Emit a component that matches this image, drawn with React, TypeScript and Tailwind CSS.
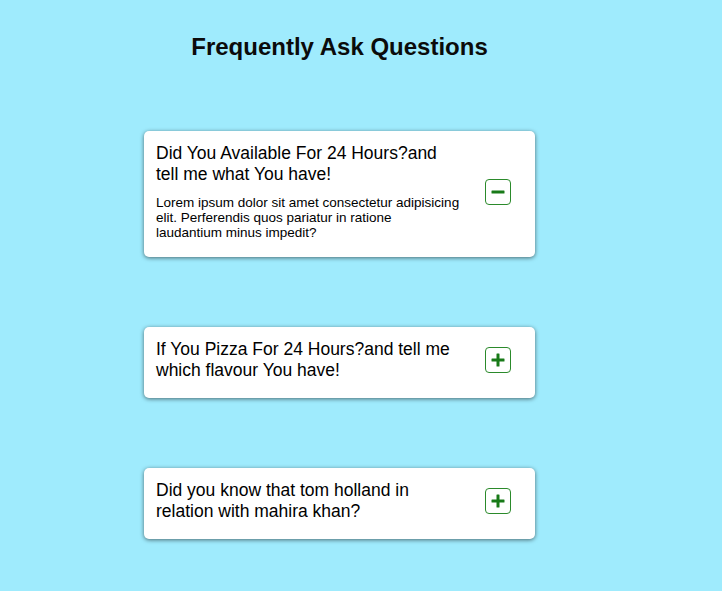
import { useState } from "react";

interface Faq {
  id: number;
  question: string;
  answer: string;
}

const faqs: Faq[] = [
  {
    id: 1,
    question: "Did You Available For 24 Hours?and tell me what You have!",
    answer:
      "Lorem ipsum dolor sit amet consectetur adipisicing elit. Perferendis quos pariatur in ratione laudantium minus impedit?",
  },
  {
    id: 2,
    question: "If You Pizza For 24 Hours?and tell me which flavour You have!",
    answer:
      "Lorem ipsum dolor sit amet consectetur adipisicing elit. Perferendis quos pariatur in ratione laudantium minus impedit?",
  },
  {
    id: 3,
    question: "Did you know that tom holland in relation with mahira khan?",
    answer:
      "Lorem ipsum dolor sit amet consectetur adipisicing elit. Perferendis quos pariatur in ratione laudantium minus impedit?",
  },
];

function ToggleIcon({ open }: { open: boolean }) {
  return (
    <svg width="16" height="16" viewBox="0 0 16 16">
      <rect x="1.5" y="6.5" width="13" height="3" rx="0.5" fill="#187a18" />
      {!open && (
        <rect x="6.5" y="1.5" width="3" height="13" rx="0.5" fill="#187a18" />
      )}
    </svg>
  );
}

function App() {
  const [openId, setOpenId] = useState<number | null>(1);

  return (
    <div className="min-h-screen bg-[#9febfd] font-['Liberation_Sans',Arial,sans-serif] text-black">
      <div className="ml-[144px] w-[391px] pt-[32px]">
        <h1 className="text-center text-[24px] font-bold leading-[30px] text-[#0b0b0b]">
          Frequently Ask Questions
        </h1>

        <div className="mt-[69px] flex flex-col gap-[70px]">
          {faqs.map((faq) => {
            const open = openId === faq.id;
            return (
              <div
                key={faq.id}
                className="flex items-center rounded-[5px] bg-white pl-3 pr-[24px] pt-3 pb-[17px] shadow-[0_1px_4px_rgba(0,0,0,0.55)]"
              >
                <div className="w-[305px]">
                  <h2 className="text-[17.5px] leading-[21px] font-normal">
                    {faq.question}
                  </h2>
                  {open && (
                    <p className="mt-[10px] text-[13.5px] leading-[15px]">
                      {faq.answer}
                    </p>
                  )}
                </div>
                <button
                  onClick={() => setOpenId(open ? null : faq.id)}
                  className="ml-auto flex h-[26px] w-[26px] items-center justify-center rounded-[4px] border border-[#2b8a2b] bg-white"
                >
                  <ToggleIcon open={open} />
                </button>
              </div>
            );
          })}
        </div>
      </div>
    </div>
  );
}

export default App;
